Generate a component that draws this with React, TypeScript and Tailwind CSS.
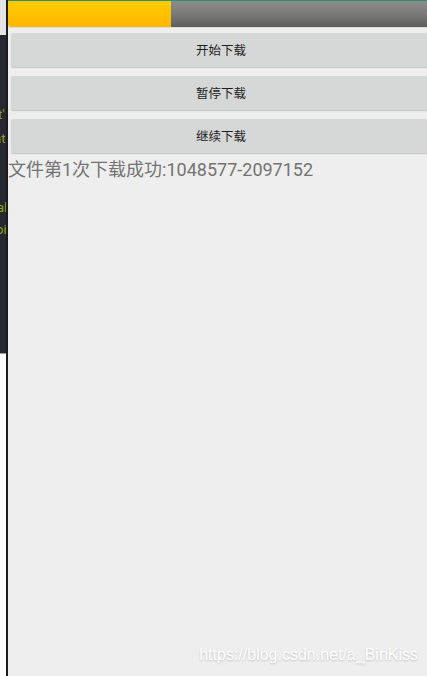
import React from "react";

function Btn({ label }: { label: string }) {
  return (
    <div className="h-[34px] ml-[3px] -mr-[4px] rounded-[2px] bg-[#d6d7d7] shadow-[0_1px_1px_rgba(0,0,0,0.18)] flex items-center justify-center pt-[2px] text-[12.5px] text-[#1e1e1e]">
      {label}
    </div>
  );
}

export default function App() {
  return (
    <div
      className="w-[427px] h-[676px] flex overflow-hidden bg-[#eeeeee]"
      style={{ fontFamily: 'Roboto, "Noto Sans CJK SC", sans-serif' }}
    >
      {/* left strip */}
      <div className="w-[6px] shrink-0 flex flex-col">
        <div className="h-[35px] bg-[#e4e4e4]" />
        <div className="h-[318px] bg-[#252830] relative overflow-hidden text-[#8da11e] text-[13px] leading-none">
          <span className="absolute left-[-2px] top-[73px]">t'</span>
          <span className="absolute left-[-6px] top-[97px]">nt</span>
          <span className="absolute left-[-3px] top-[166px]">al</span>
          <span className="absolute left-[-4px] top-[188px]">oi</span>
        </div>
        <div className="flex-1 bg-white border-t border-[#9a9a9a]" />
      </div>
      <div className="w-[2px] shrink-0 bg-[#1b1b1b]" />
      {/* app */}
      <div className="flex-1 flex flex-col bg-[#eeeeee]">
        <div className="h-[1px] bg-[#2e8f76]" />
        <div className="h-[26px] flex">
          <div className="w-[163px] rounded-bl-[3px] bg-gradient-to-b from-[#ffcc00] to-[#ffb700]" />
          <div className="flex-1 bg-gradient-to-b from-[#8c8c8a] via-[#7a7a78] to-[#5e5e5c]" />
        </div>
        <div className="h-[1px] bg-[#dcdcdc]" />
        <div className="mt-[5px] flex flex-col gap-[9px]">
          <Btn label="开始下载" />
          <Btn label="暂停下载" />
          <Btn label="继续下载" />
        </div>
        <div className="mt-[6px] text-[18px] leading-[22px] text-[#737373] whitespace-nowrap">
          文件第1次下载成功:1048577-2097152
        </div>
        <div className="flex-1" />
        <div
          className="self-end mr-[9px] mb-[9px] text-[16px] text-white"
          style={{ textShadow: "0 1px 2px rgba(0,0,0,0.2)", fontFamily: '"Liberation Sans", Arial, sans-serif' }}
        >
          https://blog.csdn.net/a_BinKiss
        </div>
      </div>
    </div>
  );
}
